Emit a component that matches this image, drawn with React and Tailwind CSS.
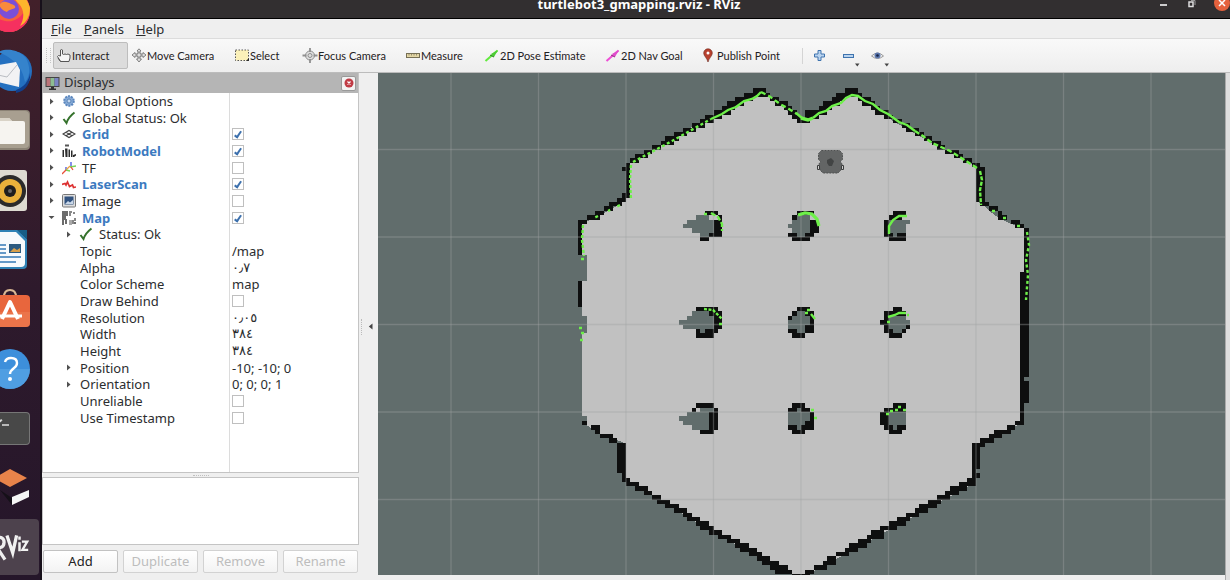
import React from "react";

/* ---------- occupancy map data: [col, row, width, height] in map cells ---------- */
const WALLS = [
  [40,0,3],[38,1,6],[36,2,4],[44,2,2],[34,3,4],[45,3,3],[33,4,3],[47,4,2],[31,5,4],[48,5,2],[52,5,3],
  [29,6,4],[49,6,2],[28,7,3],[50,7,2],[26,8,3],[24,9,3],[22,10,3],[20,11,3],[19,12,3],[17,13,2],[15,14,2],
  [13,15,3],[12,16,2],[11,17,1,8],[10,18,1],[10,24,1],[9,25,2],[7,26,3],[6,27,2],[4,28,2],[2,29,3],[0,30,2],
  [0,31,1,7],[0,44,1,6],[1,76,1],[3,77,2],[4,78,1],[5,79,3],[7,80,2],[9,81,2,7],[10,88,1,2],[11,89,1],
  [11,90,3],[13,91,3],[15,92,2],[17,93,2],[18,94,3],[20,95,3],[22,96,3],[24,97,2],[25,98,3],[27,99,3],
  [28,100,3],[30,101,3],[32,102,3],[34,103,3],[36,104,3],[37,105,4],[39,106,3],[41,107,3],[42,108,4],
  [44,109,4],[45,110,4],[49,111,4],[52,110,2],[54,109,3],[56,108,3],[57,107,2],[59,106,3],[61,105,3],
  [62,104,4],[64,103,3],[66,102,4],[67,101,3],[69,100,4],[71,99,4],[73,98,3],[75,97,3],[77,96,3],[78,95,4],
  [80,94,3],[82,93,3],[84,92,3],[85,91,4],[87,90,4],[89,89,2],[90,81,1,8],[91,81,1,6],[91,88,1],[90,81,3],
  [92,80,3],[94,79,3],[95,78,4],[98,77,2],[100,76,2],[101,42,1,35],[102,32,1,34],[102,67,1,5],
  [100,31,2],[99,30,2],[96,29,2],[96,28,1],[94,27,2],[92,26,2],[91,18,2,8],[90,17,2],[88,16,2],[86,15,2],
  [84,14,3],[82,13,2],[81,12,2],[79,11,2],[77,10,2],[75,9,3],[74,8,2],[72,7,2],[70,6,2],[68,5,3],[67,4,2],
  [65,3,3],[64,2,3],[59,1,6],[61,0,3],[58,2,3],[56,3,4],[55,4,3],[54,5,3],[52,6,3],[51,7,2],
];

const UNKNOWN = [
  [27,29,3],[25,30,6],[24,31,7],[26,32,5],[28,33,2],
  [49,29,4,5],[48,31,1],
  [71,30,4,4],[75,30,1],
  [26,51,4],[25,52,6],[23,53,8],[24,54,7],[28,55,1],
  [50,51,2],[49,52,4],[48,53,5],[48,54,4],[50,55,2],
  [71,52,4],[71,53,5],[71,54,4],[72,55,2],
  [28,73,3],[25,74,5],[23,75,7],[24,76,6],[26,77,4],
  [50,73,1],[48,74,5],[48,75,5],[48,76,5],[50,77,1],
  [71,74,4,3],[72,77,1],
];

const PILLARS = [
  [29,28,3],[32,29,1],[31,30,2,4],[30,33,2],[28,34,2],
  [50,28,4],[49,29,1],[53,30,2,3],[48,33,2],[52,33,2],[49,34,4],
  [72,28,3],[71,29,3],[70,30,1,4],[71,33,1],[73,33,2],[71,34,4],
  [27,50,5],[30,51,3],[31,52,2,3],[27,55,1],[29,55,3],[27,56,4],
  [50,50,3],[49,51,1],[52,51,2],[48,52,1],[53,52,1,2],[52,54,2],[48,55,2],[52,55,2],[49,56,3],
  [72,50,2],[70,51,5],[70,52,1],[69,53,2],[70,54,1],[75,54,1],[70,55,2],[74,55,1],[71,56,3],
  [27,72,4],[26,73,1],[31,73,1],[30,74,2,4],[28,78,3],
  [49,72,3],[48,73,2],[51,73,2],[53,74,1,4],[52,76,1],[48,77,2],[51,77,2],[49,78,3],
  [72,72,3],[70,73,5],[69,74,2,3],[70,77,2],[73,77,2],[71,78,3],
];

const cells = (list) =>
  list.map(([c, r, w, h = 1]) => `M${c} ${r}h${w}v${h}h${-w}z`).join("");

const V_LINES = [451, 538.5, 626, 713.5, 801, 888.5, 976, 1063.5, 1151];
const H_LINES = [149.5, 237, 324.5, 412, 499.5];

const FREE =
  "M41.5 .8L44 1.8L50.5 7.4L52.5 7L62 .8L64 1.8L72 7.5L80 12L91 17.8L91.5 26L93 27L94 28L96 29.5L99 31L102.5 32V42H101.5V76.5L91 81.5V90L52 111.5H49.5L30 101L17 93L10.5 89V81L5 79L2 77V75H1V56H2V52H1V44H2V38H1V31L4 29.5L8 27.5L11 25.5V17.5L28 7.8Z";

function MapCanvas() {
  return (
    <svg className="block h-full w-full bg-[#616d6c]" viewBox="378 73 847 502" preserveAspectRatio="xMidYMid slice" role="img" aria-label="Map view">
      <g transform="translate(577.9 88.25) scale(4.375)" shapeRendering="crispEdges">
        <path d={FREE} fill="#c1c1c1" />
        <path d={cells(UNKNOWN)} fill="#616d6c" />
        <path d={cells(WALLS)} fill="#0e0f0f" />
        <path d={cells(PILLARS)} fill="#0e0f0f" />
      </g>
      <g stroke="#a0a2a2" strokeOpacity=".38" strokeWidth="1.3">
        {V_LINES.map((x) => <path key={x} d={`M${x} 73V575`} />)}
        {H_LINES.map((y) => <path key={y} d={`M378 ${y}H1225`} />)}
      </g>
      <g fill="none" stroke="#6ef04a" strokeWidth="2.4">
        <path d="M711 119L722 114L728 110L736 107L744 101L752 99L757 96L761 92" />
        <path d="M633 162L672 141L711 119" strokeDasharray="3 2.5" />
        <path d="M761 92L769 96L780 104L789 109L797 114" strokeDasharray="5 3" />
        <path d="M796 113L802 118" />
        <path d="M801 118L808 120L813 118" strokeWidth="3.4" />
        <path d="M813 118L819 113L826 111L832 106L841 103L846 98L852 95L858 96L865 101L873 104L880 110L888 114L899 122L907 125L915 131" />
        <path d="M915 131L923 136L932 143L941 147L950 151L963 159L977 168" strokeDasharray="5 2.5" />
        <path d="M631 165L630 179L631 200" strokeDasharray="3 2" />
        <path d="M620 205L608 211M598 216L594 218" strokeDasharray="3 8" />
        <path d="M583 225L582 240L584 256" strokeDasharray="3 2" />
        <path d="M980 171L982 180L980 190L981 205" strokeDasharray="4 1.5" />
        <path d="M992 211h3M1003 218h3M1017 226h3" />
        <path d="M1027 232L1029 245L1026 260L1028 275L1026 300" strokeDasharray="3 2.5" />
        <path d="M581 259h3M579 328h3M581 333h3M580 340h3" />
        <path d="M704 214h3M711 213L718 217L722 224L722 231" strokeDasharray="5 2" />
        <path d="M798 215L805 213L812 214L817 219L819 226" strokeWidth="3.2" />
        <path d="M889 234L889 226L893 220L899 216L907 216" />
        <path d="M704 309L713 310L718 315L722 319M719 324h3" strokeDasharray="3 1.5" />
        <path d="M805 313h3M807 310h3M811 314L815 319" />
        <path d="M887 322h3M888 317L895 315L899 313L906 313M907 315h2" />
        <path d="M811 410h3M814 418h3" />
        <path d="M886 414h3M890 411h3M895 410h3M898 407h3M903 410h3" />
      </g>
      <g>
        <path d="M821.500 150.500h18l3 3v6l-2 2 1.500 2.500-1 6-3 3h-15l-3-3-1-6 1.500-2.500-2-2v-6z" fill="#636565" stroke="#4f5151" strokeDasharray="2 1" />
        <path d="M817.500 165.500h2v4h-2zM841.500 165.500h2v4h-2z" fill="#ccc" stroke="#3b3c3c" strokeWidth="1" />
        <path d="M827 160l4-2 3 3-2 5h-3l-2-3z" fill="#424444" />
      </g>
    </svg>
  );
}

/* ---------- launcher ---------- */
const DOCK = [
  ["Firefox", <g key="g">
    <circle cx="9" cy="29" r="21" fill="#f6603c" />
    <path d="M-12 29a21 21 0 0 0 42 0c0-5-2-10-4-13 1 10-3 20-14 23-8 1-16-2-24-10z" fill="#f5305f" />
    <path d="M14 8c8 2 14 10 16 18 0 9-4 15-10 18 5-8 4-17-1-22-4-4-7-8-5-14z" fill="#fdb52c" />
    <circle cx="9" cy="27" r="10" fill="#7a4fd6" />
    <path d="M-1 23c4-5 8-3 12-1 3 1 5 2 4 4-3 2-6 1-8 4-3-1-6-3-8-7z" fill="#f98a3b" />
  </g>],
  ["Thunderbird", <g key="g">
    <circle cx="12" cy="30" r="20" fill="#2470c0" />
    <path d="M-2 11c8-4 20-3 28 6 4 8 5 17-1 24-2-11-7-22-27-30z" fill="#3583cc" />
    <path d="M16 49c8-3 13-9 14-17 1 10-4 18-14 20z" fill="#123f8c" />
    <path d="M-2 24l18-3 4 8-1 17-21-5z" fill="#f2f2f4" />
    <path d="M-2 34l9 2 10-12" fill="none" stroke="#b9bcc2" />
  </g>],
  ["Files", <g key="g">
    <rect x="-12" y="9" width="42" height="40" rx="4" fill="#8b8275" />
    <rect x="-12" y="10" width="41" height="37" rx="4" fill="#a89f90" />
    <path d="M-8 17h17l3 3h11q2 0 2 2v19q0 2-2 2h-31z" fill="#f6f4f0" />
    <path d="M-8 17h17l3 3h-20z" fill="#d9d3c7" />
  </g>],
  ["Rhythmbox", <g key="g">
    <rect x="-12" y="9" width="39" height="41" rx="3" fill="#dedbd2" />
    <circle cx="10" cy="30" r="16" fill="#2b2b2b" />
    <circle cx="10" cy="30" r="12" fill="#e9b13b" />
    <circle cx="10" cy="30" r="6" fill="#1e1e1e" /><circle cx="10" cy="30" r="2" fill="#666" />
  </g>],
  ["LibreOffice Writer", <g key="g">
    <path d="M-12 10h30l9 9v26q0 4-4 4h-35z" fill="#2f82b5" />
    <path d="M-12 12h28l9 9v22q0 4-4 4h-33z" fill="#f7fafc" />
    <path d="M17 10h10v9z" fill="#175d86" />
    <path d="M-2 25h8M-2 29h8M-2 33h8M-2 37h23M-2 42h18" stroke="#3579b5" strokeWidth="1.4" />
    <rect x="9" y="24" width="12" height="9" fill="#2b5a80" /><path d="M10 32l4-4 3 2 3-2v4z" fill="#d8a04b" />
  </g>],
  ["Ubuntu Software", <g key="g">
    <path d="M4 17q0-7 6-7t6 7" fill="none" stroke="#d9b894" strokeWidth="2" />
    <path d="M-12 15h38q4 0 4 4v24q0 4-4 4h-38z" fill="#e8663d" />
    <path d="M-12 32h42v11q0 4-4 4h-38z" fill="#f08a60" opacity=".4" />
    <path d="M2 39L10 22L18 39" fill="none" stroke="#fff" strokeWidth="4" strokeLinejoin="round" />
    <path d="M-2 36h24" stroke="#fff" strokeWidth="3" />
  </g>],
  ["Help", <g key="g">
    <circle cx="10" cy="30" r="20" fill="#3d8fdb" />
    <path d="M-10 30a20 20 0 0 0 40 0z" fill="#5ba8e6" opacity=".6" />
    <path d="M5 23q1-4 6-4 6 0 6 5 0 3-3 5-4 3-4 6" fill="none" stroke="#fff" strokeWidth="2.4" />
    <circle cx="10" cy="40" r="2" fill="#fff" />
  </g>],
  ["Terminal", <g key="g">
    <rect x="-12" y="13" width="42" height="33" rx="4" fill="#767676" />
    <rect x="-12" y="14" width="41" height="31" rx="3" fill="#484848" />
    <path d="M-2 22l4-1-4 3M2 26h7" stroke="#ddd" strokeWidth="1.5" fill="none" />
  </g>],
  ["Gazebo", <g key="g">
    <path d="M-6 19l16-9 17 9-17 9z" fill="#e8834a" />
    <path d="M0 31l12 8v7z" fill="#151018" />
    <path d="M12 38l17-7v7l-17 8z" fill="#f6f6f6" />
  </g>],
  ["RViz", <g key="g">
    <path d="M-4 18v24M-4 19q8-1 8 5t-7 6l8 12" fill="none" stroke="#eee" strokeWidth="3.400" />
    <path d="M7 17l6 18 4-18" fill="none" stroke="#f2f2f2" strokeWidth="3.400" />
    <path d="M20 24v9.500M20 18v3.500" stroke="#f2f2f2" strokeWidth="2.600" /><path d="M22.500 23.500h5.500l-5 8.500h6" fill="none" stroke="#f2f2f2" strokeWidth="2.400" />
  </g>],
];

function Dock() {
  return (
    <nav aria-label="Launcher" className="w-[42px] shrink-0 overflow-hidden border-r-2 border-[#17101a] bg-gradient-to-b from-[#42202a] via-[#2e1a2c] to-[#25162a]">
      <div className="-mt-[19px] flex h-[calc(100%+16px)] flex-col">
        {DOCK.map(([name, art]) => (
          <button key={name} aria-label={name} className="flex min-h-0 w-full flex-1 items-center">
            <svg viewBox="0 0 40 58" className={name === "RViz" ? "h-[56px] w-[39px] rounded-r bg-[#4d424d]" : "h-[58px] w-10"}>{art}</svg>
          </button>
        ))}
      </div>
    </nav>
  );
}

/* ---------- toolbar ---------- */
const ICON = {
  hand: <path d="M4.500 13.500h8.500l1-3.500V7l-2-1-1.500.5L9 6l-1.500.5L6.500 6V2L5.500 1.500 4.500 2v6L2.500 7.500 1.500 8.500zM4.500 13.500L2 10" fill="#f4f4f4" stroke="#555" />,
  move: <g fill="#ddd" stroke="#777" strokeWidth=".9"><path d="M1 7l3-2.500V6h8V4.500L15 7l-3 2.500V8H4v1.500z" /><path d="M8 .8L10 3H9v8h1.500L8 14l-2.500-3H7V3H6z" /><circle cx="8" cy="7" r="2.200" /></g>,
  select: <g><rect x="1.500" y="2" width="13" height="10.500" fill="#fbf1b9" stroke="#555" strokeDasharray="1.500 1.500" /><path d="M12 12.500l3-2v2.500z" fill="#222" /></g>,
  focus: <g fill="none" stroke="#8f8f8f"><circle cx="8" cy="7.500" r="4.500" fill="#dedede" /><circle cx="8" cy="7.500" r="2" /><path d="M8 0v4M8 11v4M.5 7.500h4M11.500 7.500h4" strokeWidth="1.800" /></g>,
  ruler: <g><rect x="1.500" y="5.500" width="13" height="4" fill="#e4d7a6" stroke="#766f55" /><path d="M4 6v1.500M6.500 6v1.500M9 6v1.500M11.500 6v1.500" stroke="#766f55" strokeWidth=".7" /></g>,
  pose: <g><path d="M1.500 13L13.500 2.500" stroke="#62ea3e" strokeWidth="2" /><path d="M7 6l7-4-4 7z" fill="#4ccc34" /><path d="M6 7l4 2" stroke="#2c7a22" /></g>,
  nav: <g><path d="M1.500 13L13.500 2.500" stroke="#ee4ed5" strokeWidth="2" /><path d="M7 6l7-4-4 7z" fill="#e04dcb" /><path d="M6 7l4 2" stroke="#8e2c80" /></g>,
  pin: <g><path d="M5 .8a4.300 4.300 0 0 1 4.300 4.300C9.300 8 6 10 5 14 4 10 .7 8 .7 5.100A4.300 4.300 0 0 1 5 .8z" fill="#b8412f" stroke="#6c2317" strokeWidth=".6" /><circle cx="5" cy="5" r="1.500" fill="#fff" /></g>,
};

function Tool({ icon, label, className, narrow }) {
  return (
    <button className={`flex h-[27px] shrink-0 items-center whitespace-nowrap pl-[2px] ${className}`}>
      <svg className={`${narrow ? "mr-[4px] w-[10px]" : "w-4"} h-[15px] shrink-0`} viewBox={narrow ? "0 0 10 15" : "0 0 16 15"}>{ICON[icon]}</svg>
      <span className="pt-[2px]">{label}</span>
    </button>
  );
}

function Toolbar() {
  return (
    <div role="toolbar" className="flex h-[35px] shrink-0 items-center overflow-hidden border-y border-t-[#dcdcdc] border-b-[#bcbcbc] bg-gradient-to-b from-[#f9f9f9] to-[#eeeeee] pl-1 font-[Lato,sans-serif] text-[11px] text-[#1f2123]">
      <div className="mr-[2px] h-[15px] w-[5px] border-x border-dotted border-[#c4c4c4]" />
      <Tool icon="hand" label="Interact" className="w-[75px] rounded-xs border border-[#bdbdbd] bg-[#dcdcdc]" />
      <Tool icon="move" label="Move Camera" className="ml-[1px] w-[103px]" />
      <Tool icon="select" label="Select" className="w-[68px]" />
      <Tool icon="focus" label="Focus Camera" className="w-[103px]" />
      <Tool icon="ruler" label="Measure" className="w-[79px]" />
      <Tool icon="pose" label="2D Pose Estimate" className="w-[121px]" />
      <Tool icon="nav" label="2D Nav Goal" className="w-[98px]" />
      <Tool icon="pin" label="Publish Point" narrow className="w-[101px]" />
      <div className="mr-[10px] h-4 w-px bg-[#d4d4d4]" />
      <button aria-label="Add tool" className="mr-[16px]">
        <svg width="13" height="13" viewBox="0 0 13 13"><path d="M5 1.500h3V5h3.500v3H8v3.500H5V8H1.500V5H5z" fill="#b9d3ee" stroke="#3e73ae" /></svg>
      </button>
      <button aria-label="Remove tool" className="mr-[9px]">
        <svg width="20" height="22" viewBox="0 0 20 22"><rect x="1.500" y="9.500" width="10" height="3" fill="#b9d3ee" stroke="#3e73ae" /><path d="M13 18.500h4.500l-2.200 3z" fill="#444" /></svg>
      </button>
      <button aria-label="Visibility">
        <svg width="20" height="22" viewBox="0 0 20 22"><path d="M.5 11Q6.500 5 12.500 11 6.500 16 .5 11z" fill="#eee" stroke="#999" /><circle cx="6.500" cy="10.500" r="3" fill="#5d78ad" /><circle cx="6.500" cy="10.500" r="1.300" fill="#162447" /><path d="M13.500 18.500H18l-2.200 3z" fill="#444" /></svg>
      </button>
    </div>
  );
}

/* ---------- displays tree ---------- */
const ROW_ICON = {
  gear: <g><circle cx="7" cy="7" r="4.800" fill="#86aad6" stroke="#5a86bd" strokeWidth="2" strokeDasharray="2 1" /><circle cx="7" cy="7" r="2" fill="#c5d8ee" stroke="#4a76ad" strokeWidth=".8" /></g>,
  tick: <path d="M1.500 8l3 4q2-6 8-10.500" fill="none" stroke="#35722c" strokeWidth="2" />,
  grid: <path d="M1 7l6-3.500L13 7l-6 3.500zM4 5.200l6 3.500M10 5.200L4 8.800" fill="none" stroke="#444" strokeWidth="1.100" />,
  robot: <g fill="#2c2c2c"><path d="M3 .5h4v2H3z" opacity=".8" /><path d="M.5 6H2v7H.5zM3 4.500h2.500V13H3.500zM6.500 5.500H8V13H6.500zM9 6.500h1.500V13H9zM11 11l3-1v1.500l-2 1.500h-1z" /></g>,
  tf: <g fill="none" strokeWidth="1.300"><path d="M9 1v5M4 6v4" stroke="#4454e0" /><path d="M8 5l-4 4" stroke="#f0a040" /><path d="M8 6l6-1M4 9l4 1" stroke="#77d355" /><path d="M4 9l-4 4M9 6l2 3" stroke="#e8503a" /></g>,
  laser: <path d="M0 7.500l3-1 1 1.500 1.500-3 2 4.500 3-1.500 1 2.500 2.500-.5" fill="none" stroke="#dd3232" strokeWidth="1.700" />,
  image: <g><rect x=".5" y=".5" width="13" height="12.500" rx="1" fill="#ddd" stroke="#777" /><rect x="2.500" y="2.500" width="9" height="8" fill="#31527f" /><path d="M3 10l3-3 2 1.500L11 6v4z" fill="#c9d7e8" /></g>,
  map: <g fill="#6c6c6c"><path d="M0 0h6v5H4v3h1v5H3V9H2v5H0z" /><path d="M7 0h3v2H9v3H7zM11 1h2v2h-2zM10 9h2v4h-2zM12 7h2v3h-2z" fill="#888" /><path d="M7 9h3v5H7z" fill="#aaa" /><path d="M12 11h2v2h-2z" /></g>,
};

const ROWS = [
  { l: "Global Options", i: "gear", a: "r" },
  { l: "Global Status: Ok", i: "tick", a: "r" },
  { l: "Grid", i: "grid", a: "r", b: 1, c: true },
  { l: "RobotModel", i: "robot", a: "r", b: 1, c: true },
  { l: "TF", i: "tf", a: "r", c: false },
  { l: "LaserScan", i: "laser", a: "r", b: 1, c: true },
  { l: "Image", i: "image", a: "r", c: false },
  { l: "Map", i: "map", a: "d", b: 1, c: true },
  { l: "Status: Ok", i: "tick", a: "r", s: 1 },
  { l: "Topic", s: 1, v: "/map" },
  { l: "Alpha", s: 1, v: "٠٫٧", ar: 1 },
  { l: "Color Scheme", s: 1, v: "map" },
  { l: "Draw Behind", s: 1, c: false },
  { l: "Resolution", s: 1, v: "٠٫٠٥", ar: 1 },
  { l: "Width", s: 1, v: "٣٨٤", ar: 1 },
  { l: "Height", s: 1, v: "٣٨٤", ar: 1 },
  { l: "Position", s: 1, a: "r", v: "-10; -10; 0" },
  { l: "Orientation", s: 1, a: "r", v: "0; 0; 0; 1" },
  { l: "Unreliable", s: 1, c: false },
  { l: "Use Timestamp", s: 1, c: false },
];

function Row({ l, i, a, b, c, s, v, ar }) {
  return (
    <tr className="h-[17px] first:h-4 [&:nth-child(3n)]:h-4">
      <th scope="row" className="border-r border-[#dcdcdc] p-0 text-left font-normal">
        <div className={`flex h-4 items-center ${s ? "pl-[21px]" : "pl-[4px]"}`}>
          <span className={`${s && !i ? "w-[16px]" : "w-[15px]"} flex shrink-0 items-center`}>
            {a && <svg width="9" height="9" viewBox="0 0 9 9"><path d={a === "r" ? "M3 1.500v6L6.500 4.500z" : "M1.500 3h6L4.500 6z"} fill="#505050" /></svg>}
          </span>
          {i && <svg width="14" height="14" viewBox="0 0 14 14" className="mr-[6px] shrink-0">{ROW_ICON[i]}</svg>}
          <span className={`whitespace-nowrap ${b ? "font-bold text-[#3c7abf]" : ""}`}>{l}</span>
        </div>
      </th>
      <td className="p-0 pl-[2px]">
        <div className="flex h-4 items-center">
          {v && <span dir="ltr" className={ar ? "font-['DejaVu_Sans',sans-serif] text-[13px]" : ""}>{v}</span>}
          {c !== undefined && (
            <input type="checkbox" aria-label={l} defaultChecked={c} className="m-0 grid size-3 appearance-none place-items-center border border-[#bfbfbf] bg-white after:hidden after:h-2 after:w-1 after:rotate-[35deg] after:border-r-2 after:border-b-2 after:border-[#3c70ad] after:content-[''] checked:after:block" />
          )}
        </div>
      </td>
    </tr>
  );
}

function Displays() {
  return (
    <section className="flex w-[317px] shrink-0 flex-col text-[13px]">
      <header className="flex h-5 shrink-0 items-center border-r border-[#c4c4c4] bg-[#b5b5b5] pl-[3px] pr-[2px]">
        <svg width="15" height="15" viewBox="0 0 15 15" className="mr-[4px]"><path d="M.5 1h14v10H.5z" fill="#444" /><path d="M1.500 2h4v8h-4z" fill="#b9747a" /><path d="M5.500 2h4v8h-4z" fill="#8dbd92" /><path d="M9.500 2h4v8h-4z" fill="#7b85c4" /><path d="M6 11h3v1.500h2V14H4v-1.500h2z" fill="#333" /></svg>
        <h2 className="flex-1">Displays</h2>
        <button aria-label="Close panel" className="grid size-[15px] place-items-center rounded-xs border border-[#999] bg-[#f2f2f2]">
          <svg width="10" height="10" viewBox="0 0 10 10"><circle cx="5" cy="5" r="4.500" fill="#c03a44" /><path d="M3.500 3.500l3 3M6.500 3.500l-3 3" stroke="#fff" strokeWidth="1.200" /></svg>
        </button>
      </header>
      <div className="min-h-0 flex-1 overflow-hidden border border-t-0 border-[#c4c4c4] bg-white">
        <div className="flex h-full flex-col">
          <table className="w-full table-fixed border-separate border-spacing-0 leading-4">
            <colgroup><col className="w-[187px]" /><col /></colgroup>
            <tbody>{ROWS.map((r, n) => <Row key={n} {...r} />)}</tbody>
          </table>
          <div className="w-[187px] flex-1 border-r border-[#dcdcdc]" />
        </div>
      </div>
      <div className="flex h-[4px] shrink-0 items-center justify-center"><span className="w-4 border-t border-dotted border-[#c0c0c0]" /></div>
      <div className="h-[68px] shrink-0 border border-[#c4c4c4] bg-white" />
      <div className="flex shrink-0 gap-[5px] px-[1px] pt-[5px] pb-[7px]">
        {["Add", "Duplicate", "Remove", "Rename"].map((t) => (
          <button key={t} disabled={t !== "Add"} className="h-[23px] flex-1 rounded-xs border border-[#c2c2c2] bg-gradient-to-b from-white to-[#f3f3f3] text-[#222] disabled:border-[#d2d2d2] disabled:text-[#bdbdbd]">{t}</button>
        ))}
      </div>
    </section>
  );
}

export default function App() {
  return (
    <div className="flex h-screen overflow-hidden bg-[#efefef] font-['Noto_Sans','Open_Sans',sans-serif] text-[13px] text-[#2b2d2f]">
      <Dock />
      <div className="flex min-w-0 flex-1 flex-col">
        <header className="flex h-[19px] shrink-0 items-start border-b border-black bg-[#322f30] text-white">
          <div className="w-[76px]" />
          <h1 className="-mt-[4px] flex-1 text-center text-[13px] leading-4 font-bold">turtlebot3_gmapping.rviz - RViz</h1>
          <div className="flex w-[70px] items-start">
            <button aria-label="Minimize" className="flex h-[6px] w-[29px] items-end"><span className="h-[2px] w-[7px] bg-[#ccc]" /></button>
            <button aria-label="Restore" className="w-[26px]"><svg width="8" height="8" viewBox="0 0 8 8" fill="none" stroke="#ddd"><path d="M1 2h4v4.500H1z" strokeWidth="1.500" /><path d="M3 .5h4V5" stroke="#999" /></svg></button>
            <button aria-label="Close" className="-mt-[5px]"><svg width="16" height="16" viewBox="0 0 16 16"><circle cx="8" cy="8" r="8" fill="#e5623d" /><path d="M5 5l6 6M11 5l-6 6" stroke="#fff" strokeWidth="1.500" /></svg></button>
          </div>
        </header>
        <nav className="flex h-[19px] shrink-0 items-center gap-[12px] pl-[9px] leading-[18px]">
          {["File", "Panels", "Help"].map((m) => (
            <button key={m}><span className="underline">{m[0]}</span>{m.slice(1)}</button>
          ))}
        </nav>
        <Toolbar />
        <div className="flex min-h-0 flex-1">
          <Displays />
          <button aria-label="Collapse panel" className="flex w-[19px] shrink-0 items-center pl-[2px]">
            <span className="mr-[6px] h-4 border-l border-dotted border-[#bbb]" />
            <svg width="5" height="7" viewBox="0 0 5 7"><path d="M4.500 .5v6L.8 3.500z" fill="#444" /></svg>
          </button>
          <main className="min-w-0 flex-1 pb-[5px]"><MapCanvas /></main>
          <div className="w-[5px] shrink-0 border-l border-[#aaa] bg-[#dedede]" />
        </div>
      </div>
    </div>
  );
}
